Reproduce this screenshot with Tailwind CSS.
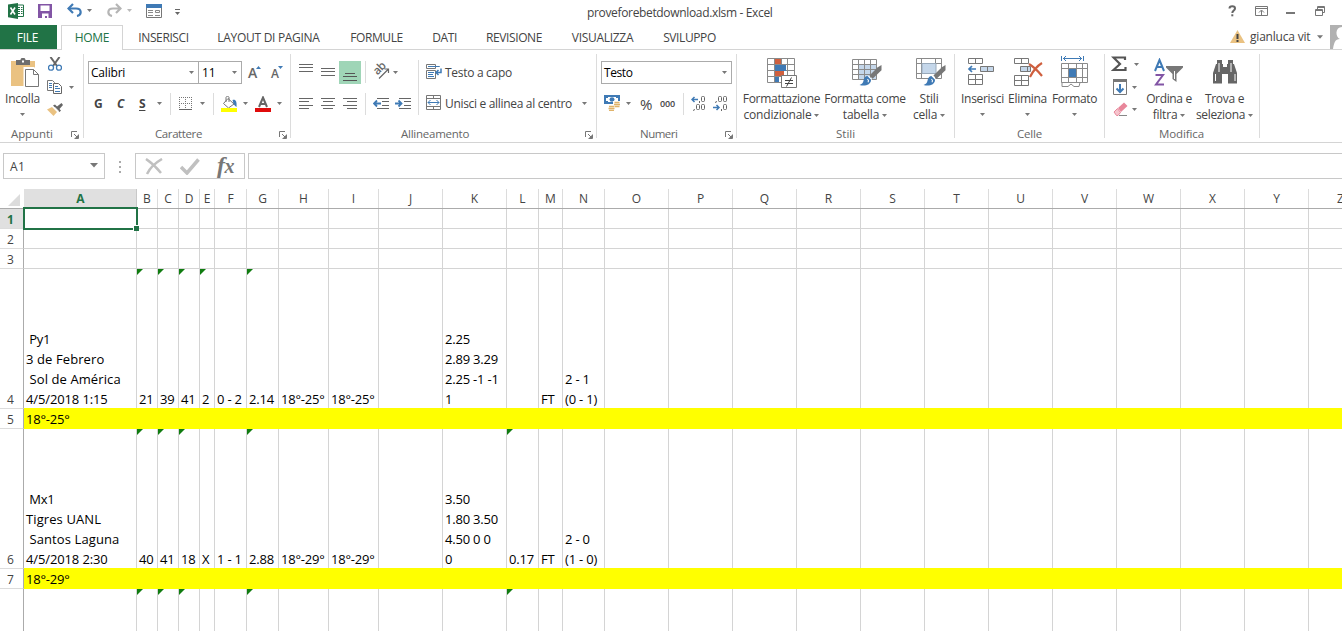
<!DOCTYPE html>
<html lang="it">
<head>
<meta charset="utf-8">
<title>proveforebetdownload.xlsm - Excel</title>
<script src="https://cdn.jsdelivr.net/npm/@tailwindcss/browser@4"></script>
</head>
<body class="w-[1342px] h-[631px] overflow-hidden bg-white text-[#444] text-[12px] leading-4 font-['Open_Sans','Noto_Sans',sans-serif] tracking-[-0.2px] whitespace-nowrap flex flex-col">
<svg width="0" height="0" class="hidden">
  <symbol id="caret" viewBox="0 0 5 3"><path d="M0 0h5L2.500 3z" fill="#777"/></symbol>
  <symbol id="launch" viewBox="0 0 8 8"><path d="M.5 6V.5H6M3 3l3.500 3.500M7.500 3.500v4h-4" fill="none" stroke="#777"/><path d="M7 4v3H4z" fill="#777"/></symbol>
  <symbol id="brush" viewBox="0 0 22 22"><path d="M21.500 1v5L13 14l-3-3 8-8z" fill="#777"/><path d="M9 12l3 3" stroke="#fff" stroke-width="1.500"/><path d="M8 11.500l3.500 3.500c0 5-6 6.500-11 5 3-1 3.500-2.500 4-5 .5-2 2-3.500 3.500-3.500z" fill="#3f7ab5"/><path d="M8 14.500c1 .5 1.500 1.500.5 3" stroke="#fff" fill="none"/></symbol>
</svg>

<!-- Title bar -->
<header class="h-[25px] shrink-0 flex items-start">
  <svg class="ml-2 mt-[3px]" width="16" height="16" viewBox="0 0 16 16"><path d="M9 2h6.500v11.500H9" fill="#fff" stroke="#217346"/><path d="M10 4.500h2M13 4.500h1.500M10 6.500h2M13 6.500h1.500M10 8.500h2M13 8.500h1.500M10 10.500h2M13 10.500h1.500" stroke="#217346"/><path d="M0 1.500L10 0v16L0 14.300z" fill="#217346"/><path d="M2.500 4.500l4.500 7M7 4.500l-4.500 7" stroke="#fff" stroke-width="1.600"/></svg>
  <svg class="ml-[14px] mt-1" width="14" height="14" viewBox="0 0 14 14"><path d="M0 0h14v14H0z" fill="#8255a5"/><path d="M2.500 1.500h9v5.500h-9zM4 9.500h6.500V14H9v-2H7v2H4z" fill="#fff"/></svg>
  <svg class="ml-[15px] mt-[3px]" width="15" height="14" viewBox="0 0 15 14"><path d="M1.500 5.500H9c6 0 6 6.500 1 7.500" fill="none" stroke="#3f7ab5" stroke-width="2.200"/><path d="M6 1L1.500 5.500 6 10" fill="none" stroke="#3f7ab5" stroke-width="2.200"/></svg>
  <svg class="ml-[5px] mt-[9px]" width="5" height="3"><use href="#caret"/></svg>
  <svg class="ml-[15px] mt-[3px]" width="15" height="14" viewBox="0 0 15 14"><path d="M13.500 5.500H6c-6 0-6 6.500-1 7.500M9 1l4.500 4.500L9 10" fill="none" stroke="#b5b5b5" stroke-width="2.200"/></svg>
  <svg class="ml-[5px] mt-[9px] opacity-50" width="5" height="3"><use href="#caret"/></svg>
  <svg class="ml-[14px] mt-1" width="16" height="14" viewBox="0 0 16 14"><path d="M.5.500h15v13H.5z" fill="#fff" stroke="#777"/><path d="M0 0h16v4H0z" fill="#3f7ab5"/><path d="M2 6.500h5M2 8.500h5M2 11.500h5M9.500 6.500h4v2h-4zM9 11.500h5" stroke="#888" fill="none"/></svg>
  <svg class="ml-[13px] mt-[9px]" width="5" height="6" viewBox="0 0 5 6"><path d="M0 .5h5" stroke="#666"/><path d="M0 3h5L2.500 6z" fill="#666"/></svg>
  <h1 class="ml-[407px] mt-[5px] w-[185px] tracking-[-0.34px]">proveforebetdownload.xlsm - Excel</h1>
  <svg class="ml-[456px] mt-[5px]" width="9" height="12" viewBox="0 0 9 12"><path d="M1.500 3.500C1.500.5 7 .5 7 3.500 7 5.500 4.300 5.500 4.300 8" fill="none" stroke="#666" stroke-width="2"/><path d="M3.300 9.300h2v2h-2z" fill="#666"/></svg>
  <svg class="ml-[18px] mt-[6px]" width="13" height="10" viewBox="0 0 13 10"><path d="M.5.500h12v9H.5zM0 2.500h13M6.500 9V4.500M4 6.500l2.500-2.500L9 6.500" fill="none" stroke="#777"/></svg>
  <div class="ml-[18px] mt-3 w-[9px] h-[2px] bg-[#777]"></div>
  <svg class="ml-5 mt-[6px]" width="10" height="10" viewBox="0 0 10 10"><path d="M2.500 3V.5h7v6H7.500M.5 3.500h7v6h-7zM0 4.500h8M2 1.500h8" fill="none" stroke="#777"/></svg>
</header>

<!-- Ribbon tabs -->
<nav class="h-[25px] shrink-0 flex border-b border-[#d4d4d4] text-center leading-[25px]">
  <div class="w-[57px] h-[24px] bg-[#217346] text-white tracking-[-0.3px]"><span class="-ml-[2px]">FILE</span></div>
  <div class="ml-1 w-[62px] h-[25px] bg-white border border-b-0 border-[#d4d4d4] text-[#217346] leading-[23px] tracking-[-0.3px]">HOME</div>
  <div class="ml-[15px] w-[51px] tracking-[-0.4px]">INSERISCI</div>
  <div class="ml-[28px] w-[103px] tracking-[-0.3px]">LAYOUT DI PAGINA</div>
  <div class="ml-[30px] w-[53px] tracking-[-0.4px]">FORMULE</div>
  <div class="ml-[29px] w-[25px] tracking-[-0.4px]">DATI</div>
  <div class="ml-[29px] w-[56px] tracking-[-0.4px]">REVISIONE</div>
  <div class="ml-[29px] w-[63px] tracking-[-0.3px]">VISUALIZZA</div>
  <div class="ml-[29px] w-[53px] tracking-[-0.4px]">SVILUPPO</div>
  <svg class="ml-[514px] mt-[5px]" width="15" height="13" viewBox="0 0 15 13"><path d="M7.500 0L15 13H0z" fill="#eac282"/><path d="M7.500 4v5M7.500 10v2" stroke="#444" stroke-width="2"/></svg>
  <span class="ml-[5px] w-[62px] text-left leading-[24px]">gianluca vit</span>
  <svg class="ml-[5px] mt-[10px]" width="6" height="4"><use href="#caret"/></svg>
  <svg class="ml-[7px]" width="12" height="24" viewBox="0 0 12 24"><path d="M0 0h12v24H0z" fill="#b1b1b1"/><path d="M12 2C5 2 5 12 10 14c-5 0-6 4-7 10h9z" fill="#fff"/></svg>
</nav>

<!-- Ribbon -->
<section class="h-[93px] shrink-0 flex border-b border-[#d4d4d4]">
  <!-- Appunti -->
  <div class="w-[84px] h-[84px] mt-1 border-r border-[#dcdcdc] flex flex-col *:shrink-0">
    <div class="h-[72px] flex">
      <div class="w-[45px] flex flex-col items-center">
        <svg class="ml-1 mt-1" width="28" height="30" viewBox="0 0 28 30"><path d="M0 3h24v25H0z" fill="#eac282"/><path d="M5 2h4.500c0-3 5-3 5 0H19v5H5z" fill="#6e6e6e"/><path d="M11 2.500h2v2h-2z" fill="#fff"/><path d="M14 10.500h8.500l5 5v13.500H14z" fill="#fff" stroke="#fff" stroke-width="3"/><path d="M14.500 11.500h8l5 5v12h-13zM22.500 11.500v5h5" fill="#fff" stroke="#777"/></svg>
        <span class="mt-[3px]">Incolla</span>
        <svg class="mt-[6px]" width="5" height="3"><use href="#caret"/></svg>
      </div>
      <div class="flex flex-col">
        <svg class="ml-[3px] mt-[3px]" width="14" height="14" viewBox="0 0 14 14"><path d="M2.500 0l6.500 9M11.500 0L5 9" stroke="#666" stroke-width="2"/><circle cx="3" cy="10.700" r="2.500" fill="#fff" stroke="#3f7ab5" stroke-width="1.300"/><circle cx="11" cy="10.700" r="2.500" fill="#fff" stroke="#3f7ab5" stroke-width="1.300"/></svg>
        <div class="flex items-center mt-[9px]"><svg class="ml-[2px]" width="15" height="14" viewBox="0 0 15 14"><path d="M.5.500h5l2 2v8h-7z" fill="#fff" stroke="#777"/><path d="M6.500 3.500h5l3 3v7h-8z" fill="#fff" stroke="#666"/><path d="M2 3.500h3M2 5.500h3M2 7.500h3M8 6.500h3M8 8.500h5M8 11.500h5" stroke="#3f7ab5"/></svg><svg class="ml-[7px]" width="5" height="3"><use href="#caret"/></svg></div>
        <svg class="ml-[2px] mt-[9px]" width="16" height="13" viewBox="0 0 16 13"><path d="M0 6.500L5 4l5 5-3.500 4z" fill="#eac282"/><path d="M6 2.500l6.500 6.500 1.500-1.500L12.500 6 16 2l-1.500-2-4.500 3.500L8 1.500z" fill="#666"/><path d="M7.500 4l4 4" stroke="#fff" stroke-width=".7"/></svg>
      </div>
    </div>
    <div class="flex text-[11.500px] text-[#666] tracking-[0px]"><span class="ml-[11px] w-[42px] tracking-[-0.1px]">Appunti</span><svg class="ml-[18px] mt-[5px]" width="8" height="8"><use href="#launch"/></svg></div>
  </div>

  <!-- Carattere -->
  <div class="w-[207px] h-[84px] mt-1 border-r border-[#dcdcdc] flex flex-col *:shrink-0">
    <div class="ml-1 mt-[7px] h-[23px] flex items-center">
      <div class="w-[111px] h-[23px] border border-[#ababab] flex items-center pl-[2px] text-black"><span class="w-[98px]">Calibri</span><svg width="5" height="3"><use href="#caret"/></svg></div>
      <div class="-ml-px w-[44px] h-[23px] border border-[#ababab] flex items-center pl-[3px] text-black"><span class="w-[30px]">11</span><svg width="5" height="3"><use href="#caret"/></svg></div>
      <div class="ml-[6px] flex items-center"><span class="font-semibold text-[14px] text-[#666]">A</span><svg class="mb-[11px] -ml-px" width="5" height="3" viewBox="0 0 5 3"><path d="M0 3h5L2.500 0z" fill="#3f7ab5"/></svg></div>
      <div class="ml-[10px] flex items-center"><span class="font-semibold text-[12px] text-[#666] mt-[2px]">A</span><svg class="mb-[11px] -ml-px" width="5" height="3" viewBox="0 0 5 3"><path d="M0 0h5L2.500 3z" fill="#3f7ab5"/></svg></div>
    </div>
    <div class="mt-2 h-[23px] flex items-center text-[12px] font-bold">
      <span class="ml-[10px] w-[23px]">G</span><span class="w-[22px] italic">C</span><span class="w-[18px] underline underline-offset-2">S</span>
      <svg width="5" height="3"><use href="#caret"/></svg>
      <i class="ml-2 w-px h-[22px] bg-[#dcdcdc]"></i>
      <svg class="ml-2" width="13" height="13" viewBox="0 0 13 13"><path d="M.5 0v12M6.500 0v12M12.500 0v12M0 .5h13M0 6.500h13" stroke="#777" stroke-dasharray="1 1"/><path d="M0 12.500h13" stroke="#666"/></svg>
      <svg class="ml-2" width="5" height="3"><use href="#caret"/></svg>
      <i class="ml-2 w-px h-[22px] bg-[#dcdcdc]"></i>
      <svg class="ml-[7px]" width="16" height="16" viewBox="0 0 16 16"><path d="M7 2.500l6 5.500-5.500 4-5-4.500z" fill="#fff" stroke="#777"/><path d="M5 6V1.500c0-1.500 3-1.500 3 0V6" fill="none" stroke="#777"/><path d="M11.500 4c3-1 4.500 1 4 7-2-1-3-3-4-7z" fill="#3f7ab5"/><path d="M0 12h16v4H0z" fill="#ff0"/></svg>
      <svg class="ml-[6px]" width="5" height="3"><use href="#caret"/></svg>
      <svg class="ml-[7px]" width="16" height="16" viewBox="0 0 16 16"><path d="M4 11L8 1.500 12 11M5.500 8h5" fill="none" stroke="#666" stroke-width="2"/><path d="M0 12h16v4H0z" fill="#e00b0b"/></svg>
      <svg class="ml-[6px]" width="5" height="3"><use href="#caret"/></svg>
    </div>
    <div class="mt-[11px] flex text-[11.500px] text-[#666] tracking-[0px]"><span class="ml-[71px] w-[48px] tracking-[-0.4px]">Carattere</span><svg class="ml-[76px] mt-[5px]" width="8" height="8"><use href="#launch"/></svg></div>
  </div>

  <!-- Allineamento -->
  <div class="w-[306px] h-[84px] mt-1 border-r border-[#dcdcdc] flex flex-col *:shrink-0">
    <div class="h-[61px] flex">
      <div class="w-[127px] mt-[7px] flex flex-col">
        <div class="h-[23px] flex items-start">
          <svg class="ml-2 mt-[3px]" width="14" height="8" viewBox="0 0 14 8"><path d="M0 .5h14M0 3.500h14M0 7.500h14" stroke="#666"/></svg>
          <svg class="ml-2 mt-[7px]" width="14" height="8" viewBox="0 0 14 8"><path d="M0 .5h14M0 3.500h14M0 7.500h14" stroke="#666"/></svg>
          <div class="ml-1 w-[22px] h-[23px] bg-[#9fd5b7] pl-1 pt-3"><svg width="14" height="8" viewBox="0 0 14 8"><path d="M2 .5h10M0 3.500h14M0 7.500h14" stroke="#555"/></svg></div>
          <i class="ml-1 w-px h-[22px] bg-[#dcdcdc]"></i>
          <svg class="ml-[7px] mt-[3px] overflow-visible" width="17" height="15" viewBox="0 0 17 15"><text x="0" y="0" transform="translate(4.500 11.500) rotate(-45)" font-size="11.500" font-weight="600" letter-spacing="-.5" fill="#666">ab</text><path d="M6 14.500L15 5.500M11.500 5h4v4" fill="none" stroke="#666" stroke-width="1.200"/></svg>
          <svg class="ml-[3px] mt-[10px]" width="5" height="3"><use href="#caret"/></svg>
        </div>
        <div class="mt-2 h-[23px] flex items-center">
          <svg class="ml-2 -mt-px" width="14" height="11" viewBox="0 0 14 11"><path d="M0 .5h14M0 3.500h10M0 7.500h14M0 10.500h10" stroke="#666"/></svg>
          <svg class="ml-2 -mt-px" width="14" height="11" viewBox="0 0 14 11"><path d="M0 .5h14M2 3.500h10M0 7.500h14M2 10.500h10" stroke="#666"/></svg>
          <svg class="ml-2 -mt-px" width="14" height="11" viewBox="0 0 14 11"><path d="M0 .5h14M4 3.500h10M0 7.500h14M4 10.500h10" stroke="#666"/></svg>
          <i class="ml-2 w-px h-[22px] bg-[#dcdcdc]"></i>
          <svg class="ml-[7px] -mt-px" width="16" height="11" viewBox="0 0 16 11"><path d="M4 .5h12M9 3.500h7M9 7.500h7M4 10.500h12" stroke="#666"/><path d="M8 5.500H1M4 2.500l-3 3 3 3" stroke="#3f7ab5" stroke-width="1.800" fill="none"/></svg>
          <svg class="ml-[6px] -mt-px" width="16" height="11" viewBox="0 0 16 11"><path d="M4 .5h12M9 3.500h7M9 7.500h7M4 10.500h12" stroke="#666"/><path d="M0 5.500h6.500M3.500 2.500l3 3-3 3" stroke="#3f7ab5" stroke-width="1.800" fill="none"/></svg>
        </div>
      </div>
      <i class="mt-[6px] w-px h-[55px] bg-[#dcdcdc]"></i>
      <div class="ml-[7px] mt-[7px] flex flex-col">
        <div class="h-[23px] flex items-center"><svg class="-mt-[2px]" width="16" height="15" viewBox="0 0 16 15"><path d="M.5.500h9v4h-9zM9.500 2.500h4M.5 6.500h9v8h-9z" fill="#fff" stroke="#777"/><path d="M2 2.500h11.500M2 8.500h6M2 10.500h5M2 12.500h6" stroke="#3f7ab5"/><path d="M15 4.500v4h-5M12.500 6L10 8.500l2.500 2.500" fill="none" stroke="#3f7ab5" stroke-width="1.500"/></svg><span class="ml-[3px] tracking-[-0.3px]">Testo a capo</span></div>
        <div class="mt-2 h-[23px] flex items-center"><svg class="-mt-[2px]" width="15" height="15" viewBox="0 0 15 15"><path d="M.5.500h14v14H.5zM0 3.500h15M0 11.500h15M7.500 0v3.500M7.500 11.500V15" fill="#fff" stroke="#777"/><path d="M2 7.500h11M4.500 5l-2.500 2.500 2.500 2.500M10.500 5l2.500 2.500-2.500 2.500" fill="none" stroke="#3f7ab5"/></svg><span class="ml-1 w-[127px] tracking-[-0.32px]">Unisci e allinea al centro</span><svg class="ml-[10px]" width="5" height="3"><use href="#caret"/></svg></div>
      </div>
    </div>
    <div class="mt-[11px] flex text-[11.500px] text-[#666] tracking-[0px]"><span class="ml-[110px] w-[68px] tracking-[-0.25px]">Allineamento</span><svg class="ml-[116px] mt-[5px]" width="8" height="8"><use href="#launch"/></svg></div>
  </div>

  <!-- Numeri -->
  <div class="w-[140px] h-[84px] mt-1 border-r border-[#dcdcdc] flex flex-col *:shrink-0">
    <div class="ml-1 mt-[7px] w-[131px] h-[23px] border border-[#ababab] flex items-center pl-[2px] text-black"><span class="w-[118px] tracking-[-0.4px]">Testo</span><svg width="5" height="3"><use href="#caret"/></svg></div>
    <div class="mt-2 h-[23px] flex items-center">
      <svg class="ml-[7px] -mt-px" width="17" height="16" viewBox="0 0 17 16"><path d="M1 1h14v7H1z" fill="#fff" stroke="#3f7ab5" stroke-width="2"/><path d="M0 0h4v3H0zM12 0h4v3h-4zM0 6h4v3H0z" fill="#3f7ab5"/><ellipse cx="8" cy="4.500" rx="2.500" ry="2.200" fill="#3f7ab5"/><path d="M9 6h8v8h-5v2H4v-6h5z" fill="#fff"/><path d="M10.500 7.500h5M10 9.500h6M10.500 11.500h5M5 11.500h5M4.500 13.500h6M5 15.500h5" stroke="#e0b36a" stroke-width="1.400"/></svg>
      <svg class="ml-[5px]" width="5" height="3"><use href="#caret"/></svg>
      <span class="ml-[9px] w-[20px] text-[15px]">%</span><span class="w-[23px] text-[9px] font-semibold tracking-[-0.200px]">000</span>
      <i class="w-px h-[22px] bg-[#dcdcdc]"></i>
      <svg class="ml-[7px]" width="15" height="15" viewBox="0 0 15 15"><g fill="none" stroke="#666"><rect x="10.500" y=".5" width="3" height="5" rx="1"/><rect x="5.500" y="8.500" width="3" height="5" rx="1"/><rect x="10.500" y="8.500" width="3" height="5" rx="1"/><path d="M8.500 5v2M3.500 13l-1 2"/></g><path d="M7 3.500H1M3.500 1L1 3.500 3.500 6" stroke="#3f7ab5" stroke-width="1.500" fill="none"/></svg>
      <svg class="ml-[7px]" width="15" height="15" viewBox="0 0 15 15"><g fill="none" stroke="#666"><rect x="5.500" y=".5" width="3" height="5" rx="1"/><rect x="10.500" y=".5" width="3" height="5" rx="1"/><rect x="10.500" y="8.500" width="3" height="5" rx="1"/><path d="M3.500 5l-1 2M8.500 13v2"/></g><path d="M0 11.500h6M3.500 9L6 11.500 3.500 14" stroke="#3f7ab5" stroke-width="1.500" fill="none"/></svg>
    </div>
    <div class="mt-[11px] flex text-[11.500px] text-[#666] tracking-[0px]"><span class="ml-[43px] w-[38px] tracking-[-0.5px]">Numeri</span><svg class="ml-[47px] mt-[5px]" width="8" height="8"><use href="#launch"/></svg></div>
  </div>

  <!-- Stili -->
  <div class="w-[218px] h-[84px] mt-1 border-r border-[#dcdcdc] flex flex-col *:shrink-0">
    <div class="h-[72px] flex">
      <div class="ml-[6px] w-[77px] flex flex-col items-center">
        <svg class="mt-1 ml-[3px]" width="32" height="31" viewBox="0 0 32 31"><path d="M1 .5h27v24H1z" fill="#fff"/><path d="M8 1h6v6H8zM8 13h9v6H8z" fill="#cf5f3e"/><path d="M8 7h11v6H8zM8 19h4v6H8z" fill="#3f7ab5"/><path d="M.5.500h27v24H.5zM0 6.500h28M0 12.500h8M19 12.500h9M0 18.500h28M7.500 0v25M20.500 0v25M14.500 0v6" fill="none" stroke="#8a8a8a"/><path d="M14.500 17.500h15v12h-15z" fill="#fff" stroke="#777"/><path d="M18 22.500h8M18 25.500h8M24.500 19.500l-5 9" stroke="#444"/></svg>
        <span class="mt-[2px] tracking-[-0.3px]">Formattazione</span>
        <span class="flex items-center gap-[3px]">condizionale<svg width="5" height="3"><use href="#caret"/></svg></span>
      </div>
      <div class="ml-1 w-[82px] flex flex-col items-center">
        <svg class="mt-[5px] ml-[4px]" width="32" height="30" viewBox="0 0 32 30"><path d="M7 6h18v15H7z" fill="#c5d7ea"/><path d="M1.500.5h24v20h-24zM1 5.500h25M1 10.500h25M1 15.500h25M7.500 0v21M13.500 0v21M19.500 0v21" fill="none" stroke="#8a8a8a"/><svg x="8" y="5" width="23" height="23"><use href="#brush"/></svg></svg>
        <span class="mt-[2px] tracking-[-0.3px]">Formatta come</span>
        <span class="flex items-center gap-[3px]">tabella<svg width="5" height="3"><use href="#caret"/></svg></span>
      </div>
      <div class="w-[46px] flex flex-col items-center">
        <svg class="mt-1 ml-[4px]" width="32" height="31" viewBox="0 0 32 31"><path d="M1.500.5h25v20h-25zM1 5.500h26M1 15.500h26M6.500 0v21M20.500 0v21" fill="#fff" stroke="#8a8a8a"/><path d="M7 5.500h14v10H7z" fill="#c5d7ea" stroke="#9ab"/><svg x="8" y="6" width="23" height="23"><use href="#brush"/></svg></svg>
        <span class="mt-[2px]">Stili</span>
        <span class="flex items-center gap-[3px]">cella<svg width="5" height="3"><use href="#caret"/></svg></span>
      </div>
    </div>
    <div class="flex text-[11.500px] text-[#666] tracking-[0px]"><span class="ml-[99px]">Stili</span></div>
  </div>

  <!-- Celle -->
  <div class="w-[150px] h-[84px] mt-1 border-r border-[#dcdcdc] flex flex-col *:shrink-0">
    <div class="h-[72px] flex">
      <div class="ml-[5px] w-[45px] flex flex-col items-center">
        <svg class="mt-1 -ml-[3px]" width="28" height="28" viewBox="0 0 28 28"><path d="M1.500.5h14v5h-14zM8.500.5v5M1.500 16.500h14v10h-14zM8.500 16.500v10M1.500 21.500h14" fill="none" stroke="#777"/><path d="M13.500 8.500h13v5h-13zM20.500 8.500v5" fill="#c5d7ea" stroke="#777"/><path d="M9 11H2M5 8l-3 3 3 3" fill="none" stroke="#3f7ab5" stroke-width="1.700"/></svg>
        <span class="mt-[5px] tracking-[-0.3px]">Inserisci</span>
        <svg class="mt-[6px]" width="5" height="3"><use href="#caret"/></svg>
      </div>
      <div class="ml-px w-[43px] flex flex-col items-center">
        <svg class="mt-1" width="30" height="28" viewBox="0 0 30 28"><path d="M1.500.5h14v5h-14zM8.500.5v5M1.500 17.500h14v10h-14zM8.500 17.500v10M1.500 22.500h14" fill="none" stroke="#777"/><path d="M7.500 8.500h10v5h-10zM14.500 8.500v5" fill="#c5d7ea" stroke="#777"/><path d="M16 6c5 3 9 7 13 12M29 5c-5 3-9 8-12 14" fill="none" stroke="#cf5f3e" stroke-width="2.200"/></svg>
        <span class="mt-[5px] tracking-[-0.3px]">Elimina</span>
        <svg class="mt-[6px]" width="5" height="3"><use href="#caret"/></svg>
      </div>
      <div class="ml-px w-[49px] flex flex-col items-center">
        <svg class="mt-[2px]" width="29" height="32" viewBox="0 0 29 32"><path d="M1.500 0v5M23.500 0v5M3 2.500h19M6 0L3.500 2.500 6 5M19 0l2.500 2.500L19 5" fill="none" stroke="#3f7ab5"/><path d="M1.500 7.500h26v19h-26zM1 12.500h27M1 21.500h27M8.500 7v20M16.500 7v20M22.500 7v20M2 26v4.500h6l3-2.500 3 2.500h5l1-4" fill="none" stroke="#8a8a8a"/><path d="M9 13h7v8H9z" fill="#3f7ab5"/></svg>
        <span class="mt-[3px] tracking-[-0.35px]">Formato</span>
        <svg class="mt-[6px]" width="5" height="3"><use href="#caret"/></svg>
      </div>
    </div>
    <div class="flex text-[11.500px] text-[#666] tracking-[0px]"><span class="ml-[62px] tracking-[-0.2px]">Celle</span></div>
  </div>

  <!-- Modifica -->
  <div class="w-[155px] h-[84px] mt-1 border-r border-[#dcdcdc] flex flex-col *:shrink-0">
    <div class="h-[72px] flex">
      <div class="ml-[6px] w-[30px] flex flex-col">
        <div class="mt-[2px] flex items-center gap-[7px]"><svg width="16" height="16" viewBox="0 0 16 16"><path d="M14 4V1.500H2.500L9 8l-6.500 6H14.500V11" fill="none" stroke="#555" stroke-width="2.200"/></svg><svg width="5" height="3"><use href="#caret"/></svg></div>
        <div class="mt-[7px] flex items-center gap-[4px]"><svg class="ml-[2px]" width="15" height="16" viewBox="0 0 15 16"><path d="M.5.500h13v15H.5z" fill="#fff" stroke="#777"/><path d="M0 0h14v3H0z" fill="#777"/><path d="M7 5v8M3.500 9.500L7 13l3.500-3.500" fill="none" stroke="#3f7ab5" stroke-width="2"/></svg><svg width="5" height="3"><use href="#caret"/></svg></div>
        <div class="mt-[7px] flex items-center gap-[4px]"><svg class="ml-[2px]" width="15" height="15" viewBox="0 0 15 15"><path d="M5 6l6-5.500L14.500 4 8 10z" fill="#e8869a"/><path d="M4.500 6.500L1 10l2.500 3.500H5l2.500-3z" fill="#f6c4cd" stroke="#e8869a"/><path d="M6 13.500h8" stroke="#888"/></svg><svg width="5" height="3"><use href="#caret"/></svg></div>
      </div>
      <div class="ml-1 w-[48px] flex flex-col items-center">
        <svg class="mt-1" width="30" height="29" viewBox="0 0 30 29"><path d="M1 13L5.500 2 10 13M2.500 9h6" fill="none" stroke="#3f7ab5" stroke-width="2"/><path d="M1.500 17h7.500l-7 9.500h8" fill="none" stroke="#8255a5" stroke-width="2"/><path d="M12 8h17v1.500l-6.500 6.500v8l-4-3v-5L12 9.500z" fill="#777"/><path d="M20.500 13v8" stroke="#fff"/></svg>
        <span class="mt-1 tracking-[-0.35px]">Ordina e</span>
        <span class="flex items-center gap-[3px]">filtra<svg width="5" height="3"><use href="#caret"/></svg></span>
      </div>
      <div class="ml-[3px] w-[58px] flex flex-col items-center">
        <svg class="mt-[6px] -ml-px" width="26" height="24" viewBox="0 0 26 24"><path d="M5 0h5v4h1v3h4V4h1V0h5v4h1l3 9v10.500h-9V14h-6v9.500H1V13l3-9h1z" fill="#666"/><path d="M3.500 14v7M23 14v7M7 3v9M19 3v9" stroke="#fff"/></svg>
        <span class="mt-[7px] -ml-px tracking-[-0.3px]">Trova e</span>
        <span class="-ml-px flex items-center gap-[3px] tracking-[-0.35px]">seleziona<svg width="5" height="3"><use href="#caret"/></svg></span>
      </div>
    </div>
    <div class="flex text-[11.500px] text-[#666] tracking-[0px]"><span class="ml-[54px] tracking-[-0.1px]">Modifica</span></div>
  </div>
</section>

<!-- Formula bar -->
<section class="h-[46px] shrink-0 pt-[10px] flex">
  <div class="ml-[3px] w-[102px] h-[26px] border border-[#c8c8c8] flex items-center pl-[6px]"><span class="w-[80px] mt-px tracking-[0.3px]">A1</span><svg width="8" height="5" viewBox="0 0 8 5" class="-mt-[2px]"><path d="M0 0h8L4 4.500z" fill="#777"/></svg></div>
  <div class="ml-[14px] mt-2 flex flex-col gap-[3px]"><i class="size-[2px] bg-[#aaa]"></i><i class="size-[2px] bg-[#aaa]"></i><i class="size-[2px] bg-[#aaa]"></i></div>
  <div class="ml-[14px] w-[110px] h-[26px] border border-[#c8c8c8] flex items-center">
    <svg class="ml-[9px]" width="18" height="17" viewBox="0 0 18 17"><path d="M1 1c6 4 11 9 15 14M17 1C10 5 5 10 2 16" fill="none" stroke="#c0c0c0" stroke-width="2.500"/></svg>
    <svg class="ml-[17px]" width="20" height="17" viewBox="0 0 20 17"><path d="M1 9l6 6L18.500 1.500" fill="none" stroke="#c0c0c0" stroke-width="3.500"/></svg>
    <span class="ml-[17px] -mt-[2px] font-['Liberation_Serif',serif] italic font-bold text-[24px] leading-6 text-[#777] tracking-[-0.5px]">f<span class="text-[20px]">x</span></span>
  </div>
  <div class="ml-[3px] flex-1 h-[26px] border border-r-0 border-[#c8c8c8]"></div>
</section>

<!-- Sheet -->
<main id="sheet" class="flex-1 flex flex-col overflow-hidden"></main>

<script>
const cols = 'ABCDEFGHIJKLMNOPQRSTUVWXYZ'.split('');
const widths = [113,21,21,21,15,32,32,50,50,64,64,32,24,42].concat(Array(12).fill(64));
const rows = [
  {h:20}, {h:20}, {h:20},
  {h:140, flags:'BCDEG', cells:{A:' Py1\n3 de Febrero\n Sol de América\n4/5/2018 1:15',B:'21',C:'39',D:'41',E:'2',F:'0 - 2',G:'2.14',H:'18°-25°',I:'18°-25°',K:'2.25\n2.89 3.29\n2.25 -1 -1\n1',M:'FT',N:'2 - 1\n(0 - 1)'}},
  {h:20, fill:true, cells:{A:'18°-25°'}},
  {h:140, flags:'BCDGL', cells:{A:' Mx1\nTigres UANL\n Santos Laguna\n4/5/2018 2:30',B:'40',C:'41',D:'18',E:'X',F:'1 - 1',G:'2.88',H:'18°-29°',I:'18°-29°',K:'3.50\n1.80 3.50\n4.50 0 0\n0',L:'0.17',M:'FT',N:'2 - 0\n(1 - 0)'}},
  {h:20, fill:true, cells:{A:'18°-29°'}},
  {h:140, flags:'BCDGL', blank:true}
];
let html = '<div class="h-5 shrink-0 flex border-b border-[#ababab] text-center leading-[20px] tracking-[0px]"><div class="w-6 shrink-0 pl-2 pt-[5px]"><svg width="12" height="12"><path d="M12 0v12H0z" fill="#dcdcdc"/></svg></div>';
cols.forEach((c, i) => {
  html += `<div class="${i ? 'shrink-0 border-r border-[#dcdcdc]' : 'shrink-0 pl-px border-r border-[#c8c8c8] bg-[#e0e0e0] text-[#217346] font-bold'}" style="width:${widths[i]}px">${c}</div>`;
});
html += '</div>';
// Word lines and dates are set slightly looser than plain numbers.
const line = s => /[a-zA-Z]{3}/.test(s) ? `<span class="tracking-[0.1px]">${s}</span>` : /\//.test(s) ? `<span class="tracking-[-0.12px]">${s}</span>` : s;
rows.forEach((r, n) => {
  html += `<div class="shrink-0 flex" style="height:${r.h}px"><div class="${n ? 'w-6 shrink-0 flex items-end border-r border-r-[#ababab] border-b border-b-[#dcdcdc] leading-[17px] tracking-[0px]' : 'w-6 shrink-0 flex items-end border-r border-r-[#ababab] border-b border-b-[#dcdcdc] bg-[#e0e0e0] text-[#217346] font-bold leading-[17px] tracking-[0px]'}"><span class="w-[21px] text-center">${r.blank ? '' : n + 1}</span></div>`;
  cols.forEach((c, i) => {
    const t = ((r.cells || {})[c] || '').split('\n').map(line).join('\n');
    const flag = (r.flags || '').includes(c) ? '<svg class="absolute left-0 top-0" width="6" height="6"><path d="M0 0h6L0 6z" fill="#107c10"/></svg>' : '';
    const sel = c === 'A' && n === 0 ? '<div class="absolute z-10 -left-px -top-[2px] w-[115px] h-[23px] border-2 border-[#217346]"><i class="absolute -right-[3px] -bottom-[3px] size-[6px] bg-[#217346] border-l border-t border-white"></i></div>' : '';
    const cls = r.fill ? 'relative shrink-0 flex items-end bg-[#ff0] -mt-px' : (r.cells ? 'relative shrink-0 flex items-end border-r border-[#d4d4d4]' : 'relative shrink-0 flex items-end border-r border-b border-[#d4d4d4]');
    html += `<div class="${cls}" style="width:${widths[i]}px">${flag}${sel}<span class="pl-[2px] whitespace-pre text-black text-[13px] leading-[20px] tracking-[-0.2px]">${t}</span></div>`;
  });
  html += '</div>';
});
document.getElementById('sheet').innerHTML = html;
</script>
</body>
</html>
